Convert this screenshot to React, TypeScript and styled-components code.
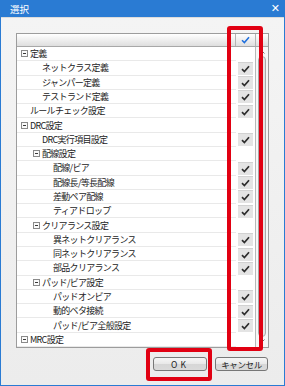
import styled, { createGlobalStyle } from 'styled-components';

type Row = {
  label: string;
  pad: number;
  group?: boolean;
  checked?: boolean;
};

const rows: Row[] = [
  { label: '定義', pad: 4, group: true },
  { label: 'ネットクラス定義', pad: 25, checked: true },
  { label: 'ジャンパー定義', pad: 25, checked: true },
  { label: 'テストランド定義', pad: 25, checked: true },
  { label: 'ルールチェック設定', pad: 13, checked: true },
  { label: 'DRC設定', pad: 4, group: true },
  { label: 'DRC実行項目設定', pad: 25, checked: true },
  { label: '配線設定', pad: 16, group: true },
  { label: '配線/ビア', pad: 36, checked: true },
  { label: '配線長/等長配線', pad: 36, checked: true },
  { label: '差動ペア配線', pad: 36, checked: true },
  { label: 'ティアドロップ', pad: 36, checked: true },
  { label: 'クリアランス設定', pad: 16, group: true },
  { label: '異ネットクリアランス', pad: 36, checked: true },
  { label: '同ネットクリアランス', pad: 36, checked: true },
  { label: '部品クリアランス', pad: 36, checked: true },
  { label: 'パッド/ビア設定', pad: 16, group: true },
  { label: 'パッドオンビア', pad: 36, checked: true },
  { label: '動的ベタ接続', pad: 36, checked: true },
  { label: 'パッド/ビア全般設定', pad: 36, checked: true },
  { label: 'MRC設定', pad: 4, group: true },
];

const GlobalStyle = createGlobalStyle`
  body {
    margin: 0;
    font-family: "Noto Sans CJK JP", "Noto Sans", sans-serif;
    color: #1b1b1b;
  }
`;

const Window = styled.div`
  width: 285px;
  height: 386px;
  box-sizing: border-box;
  display: flex;
  flex-direction: column;
  border: 1px solid #2a7bd3;
  border-top: none;
  background: #2a7bd3;
  position: relative;
`;

const TitleBar = styled.div`
  height: 17px;
  display: flex;
  align-items: center;
  justify-content: space-between;
  padding: 0 4px 0 9px;
  color: #ffffff;
  font-size: 9.5px;
`;

const Close = styled.span`
  font-family: "DejaVu Sans", sans-serif;
  font-size: 11px;
  font-weight: bold;
  line-height: 1;
`;

const Body = styled.div`
  flex: 1;
  display: flex;
  flex-direction: column;
  padding: 15px 15px 0 15px;
  background: linear-gradient(#f4f4f4, #ececec);
  border-top: 1px solid #dcdcdc;
`;

const Table = styled.div`
  position: relative;
  height: 315px;
  box-sizing: border-box;
  border: 1px solid #9c9c9c;
  background: #ffffff;
  display: flex;
  flex-direction: column;
`;

const Header = styled.div`
  height: 12px;
  display: grid;
  grid-template-columns: 218px 19px 12px;
  column-gap: 1px;
  background: linear-gradient(#ffffff, #dedede);
  border-bottom: 1px solid #a8a8a8;
`;

const HeaderCell = styled.div<{ $divider?: boolean }>`
  display: flex;
  align-items: center;
  justify-content: center;
  box-shadow: ${p => (p.$divider ? '1px 0 0 #b4b4b4' : 'none')};
`;

const Content = styled.div`
  flex: 1;
  display: flex;
`;

const List = styled.div`
  flex: 1;
  display: grid;
  grid-template-rows: repeat(21, 1fr);
`;

const RowLine = styled.div`
  display: grid;
  grid-template-columns: 219px 19px;
`;

const NameCell = styled.div<{ $pad: number }>`
  display: flex;
  align-items: center;
  gap: 2px;
  padding-left: ${p => p.$pad}px;
  border-bottom: 1px solid #e9e9e9;
  font-size: 9px;
  letter-spacing: -0.7px;
  white-space: nowrap;
  line-height: 1;
`;

const Expander = styled.span`
  position: relative;
  width: 7px;
  height: 7px;
  box-sizing: border-box;
  border: 1px solid #8a8a8a;
  flex: none;
  background: #fafafa;

  &::after {
    content: '';
    position: absolute;
    left: 1px;
    right: 1px;
    top: 2px;
    height: 1px;
    background: #3a3a3a;
  }
`;

const CheckCell = styled.div`
  display: flex;
  align-items: center;
  justify-content: center;
`;

const CheckBox = styled.div`
  width: 15px;
  height: 12px;
  display: flex;
  align-items: center;
  justify-content: center;
  background: #e4e4e4;
  border-top: 1px solid #d2d2d2;
`;

const ScrollColumn = styled.div`
  width: 12px;
  border-left: 1px solid #b8b8b8;
  display: flex;
  flex-direction: column;
  align-items: center;
  padding: 3px 0 4px;
  gap: 2px;
  background: #f7f7f7;
`;

const Thumb = styled.div`
  flex: 1;
  width: 8px;
  box-sizing: border-box;
  border: 1px solid #a9a9a9;
  border-radius: 4px;
  background: linear-gradient(to right, #f2f2f2, #e2e2e2);
`;

const Footer = styled.div`
  display: flex;
  justify-content: flex-end;
  gap: 8px;
  margin-top: 9px;
  padding-right: 1px;
`;

const Button = styled.button<{ $width: number }>`
  width: ${p => p.$width}px;
  height: 14px;
  padding: 0;
  border: 1px solid #777777;
  border-radius: 3px;
  background: linear-gradient(#f6f6f6 0%, #e8e8e8 50%, #d6d6d6 51%, #dadada 100%);
  font-family: "Noto Sans CJK JP", sans-serif;
  font-size: 8.5px;
  color: #1b1b1b;
  line-height: 1;
  display: flex;
  align-items: center;
  justify-content: center;
  letter-spacing: ${p => (p.$width > 53 ? '3px' : '-0.4px')};
`;

const Marked = styled.span`
  position: relative;
  display: flex;

  &::after {
    content: '';
    position: absolute;
    top: -9px;
    bottom: -10px;
    left: -7px;
    right: -5px;
    border: 4px solid #e10012;
    border-radius: 3px;
    pointer-events: none;
  }
`;

const ColumnMark = styled.div`
  position: absolute;
  left: 210px;
  top: -8px;
  width: 36px;
  height: 325px;
  box-sizing: border-box;
  border: 4px solid #e10012;
  border-radius: 3px;
  pointer-events: none;
`;

const Tick = ({ color, width }: { color: string; width: number }) => (
  <svg width="9" height="8" viewBox="0 0 9 8">
    <path d="M1 4.2 L3.4 6.6 L8 1.2" fill="none" stroke={color} strokeWidth={width} />
  </svg>
);

const Arrow = ({ up }: { up?: boolean }) => (
  <svg width="6" height="4" viewBox="0 0 6 4">
    <path d={up ? 'M0.5 3.5 L3 1 L5.5 3.5' : 'M0.5 0.5 L3 3 L5.5 0.5'} fill="none" stroke="#707070" strokeWidth="1" />
  </svg>
);

export default function App() {
  return (
    <>
      <GlobalStyle />
      <Window>
        <TitleBar>
          <span>選択</span>
          <Close>✕</Close>
        </TitleBar>
        <Body>
          <Table>
            <Header>
              <HeaderCell $divider />
              <HeaderCell $divider>
                <Tick color="#1f6fdc" width={1.5} />
              </HeaderCell>
              <HeaderCell />
            </Header>
            <Content>
              <List>
                {rows.map(r => (
                  <RowLine key={r.label}>
                    <NameCell $pad={r.pad}>
                      {r.group && <Expander />}
                      <span>{r.label}</span>
                    </NameCell>
                    <CheckCell>
                      {r.checked && (
                        <CheckBox>
                          <Tick color="#2e2e2e" width={1.7} />
                        </CheckBox>
                      )}
                    </CheckCell>
                  </RowLine>
                ))}
              </List>
              <ScrollColumn>
                <Arrow up />
                <Thumb />
                <Arrow />
              </ScrollColumn>
            </Content>
            <ColumnMark />
          </Table>
          <Footer>
            <Marked>
              <Button $width={54}>OK</Button>
            </Marked>
            <Button $width={53}>キャンセル</Button>
          </Footer>
        </Body>
      </Window>
    </>
  );
}
